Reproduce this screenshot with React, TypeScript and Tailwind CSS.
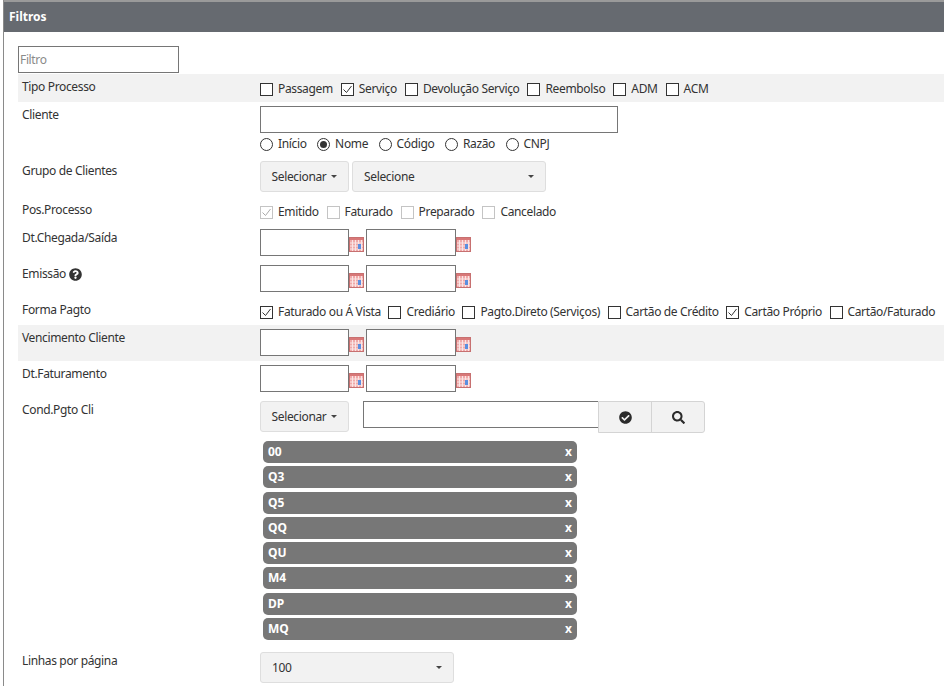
import type { ReactNode } from 'react'
import { FaCheckCircle, FaQuestionCircle, FaSearch } from 'react-icons/fa'

const font = "font-['Noto_Sans',sans-serif]"

function Caret() {
  return <span className="inline-block border-x-[3px] border-t-[3px] border-x-transparent border-t-[#444]" />
}

function CalendarIcon() {
  return (
    <svg width="15" height="15" viewBox="0 0 15 15" className="shrink-0">
      <rect x="0.5" y="0.5" width="14" height="14" fill="#f0a9a9" stroke="#c77070" />
      <rect x="1" y="1" width="13" height="2" fill="#d87878" />
      <path d="M3.5 3v11M6.5 3v11M9.5 3v11M12.5 3v11M1 6h13M1 9h13M1 12h13" stroke="#fff" strokeWidth="1" opacity="0.7" />
      <rect x="9" y="7" width="3" height="5" fill="#5b8fe0" />
    </svg>
  )
}

function Check({ label, checked, muted }: { label: string; checked?: boolean; muted?: boolean }) {
  return (
    <span className="flex items-center gap-[5px]">
      <span className={`flex h-[13px] w-[13px] items-center justify-center border bg-white ${muted ? 'border-[#c4c4c4]' : 'border-[#333]'}`}>
        {checked && (
          <svg width="11" height="11" viewBox="0 0 11 11">
            <path d="M1.5 5.5l3 3 5-6.5" fill="none" stroke={muted ? '#aaa' : '#333'} strokeWidth="1" />
          </svg>
        )}
      </span>
      <span>{label}</span>
    </span>
  )
}

function Radio({ label, checked }: { label: string; checked?: boolean }) {
  return (
    <span className="flex items-center gap-[5px]">
      <span className="flex h-[13px] w-[13px] items-center justify-center rounded-full border border-[#333] bg-white">
        {checked && <span className="h-[7px] w-[7px] rounded-full bg-[#333]" />}
      </span>
      <span>{label}</span>
    </span>
  )
}

function Row({ label, shaded, className = '', children }: { label: ReactNode; shaded?: boolean; className?: string; children: ReactNode }) {
  return (
    <div className={`flex ${shaded ? 'bg-[#f2f2f2]' : ''} ${className}`}>
      <div className="h-[26px] w-[242px] shrink-0 pl-1 pt-1 leading-[18px]">{label}</div>
      <div className="min-w-0 flex-1">{children}</div>
    </div>
  )
}

function DateInput({ className = '' }: { className?: string }) {
  return <input className={`h-[27px] border border-[#767676] bg-white ${className}`} />
}

function DateRange() {
  return (
    <div className="flex items-center pt-1">
      <DateInput className="w-[89px]" />
      <span className="mt-[3px] w-[17px]"><CalendarIcon /></span>
      <DateInput className="w-[90px]" />
      <span className="mt-[3px]"><CalendarIcon /></span>
    </div>
  )
}

function GrayButton({ className = '', children }: { className?: string; children: ReactNode }) {
  return (
    <div className={`flex h-[31px] items-center rounded-[3px] border border-[#dedede] bg-[#f2f2f2] text-[#333] ${className}`}>
      {children}
    </div>
  )
}

const tags = ['00', 'Q3', 'Q5', 'QQ', 'QU', 'M4', 'DP', 'MQ']

export default function App() {
  return (
    <div className={`${font} h-[686px] overflow-hidden bg-white text-[12px] tracking-[-0.35px] text-[#333]`}>
      <div className="ml-[3px] h-full border-l border-[#8a8a8a]">
        <div className="flex h-8 items-center border-t-2 border-[#9a9a9a] bg-[#666a70] pl-[5px] text-[12px] font-bold tracking-normal text-white">
          Filtros
        </div>
        <div className="pl-[14px] pt-[14px]">
          <input
            placeholder="Filtro"
            className="mb-px block h-[27px] w-[161px] border border-[#767676] pl-[1px] placeholder:text-[#8a8a8a]"
          />
          <Row label="Tipo Processo" shaded className="h-[28px]">
            <div className="flex gap-[8px] pt-[6px] leading-[18px]">
              <Check label="Passagem" />
              <Check label="Serviço" checked />
              <Check label="Devolução Serviço" />
              <Check label="Reembolso" />
              <Check label="ADM" />
              <Check label="ACM" />
            </div>
          </Row>
          <Row label="Cliente" className="h-[56px]">
            <div className="pt-1">
              <input className="block h-[27px] w-[358px] border border-[#767676]" />
              <div className="flex gap-[10.5px] pt-[2px] leading-[18px]">
                <Radio label="Início" />
                <Radio label="Nome" checked />
                <Radio label="Código" />
                <Radio label="Razão" />
                <Radio label="CNPJ" />
              </div>
            </div>
          </Row>
          <Row label="Grupo de Clientes" className="h-[39px]">
            <div className="flex gap-[3px] pt-[3px]">
              <GrayButton className="w-[89px] justify-center gap-[5px]">Selecionar <Caret /></GrayButton>
              <GrayButton className="w-[194px] justify-between pl-[11px] pr-[11px]">Selecione <Caret /></GrayButton>
            </div>
          </Row>
          <Row label="Pos.Processo" className="h-[28px]">
            <div className="flex gap-[8px] pt-[6px] leading-[18px]">
              <Check label="Emitido" checked muted />
              <Check label="Faturado" muted />
              <Check label="Preparado" muted />
              <Check label="Cancelado" muted />
            </div>
          </Row>
          <Row label="Dt.Chegada/Saída" className="h-[36px]"><DateRange /></Row>
          <Row
            label={<span className="flex items-center gap-[3px]">Emissão <FaQuestionCircle className="text-[13px] text-[#333]" /></span>}
            className="h-[36px]"
          >
            <DateRange />
          </Row>
          <Row label="Forma Pagto" className="h-[28px]">
            <div className="flex gap-[7.5px] pt-[6px] leading-[18px] whitespace-nowrap">
              <Check label="Faturado ou Á Vista" checked />
              <Check label="Crediário" />
              <Check label="Pagto.Direto (Serviços)" />
              <Check label="Cartão de Crédito" />
              <Check label="Cartão Próprio" checked />
              <Check label="Cartão/Faturado" />
            </div>
          </Row>
          <Row label="Vencimento Cliente" shaded className="h-[36px]"><DateRange /></Row>
          <Row label="Dt.Faturamento" className="h-[36px]"><DateRange /></Row>
          <Row label="Cond.Pgto Cli" className="h-[251px]">
            <div className="flex pt-1">
              <GrayButton className="w-[89px] justify-center gap-[5px]">Selecionar <Caret /></GrayButton>
              <input className="ml-[14px] h-[27px] w-[235px] border border-r-0 border-[#767676]" />
              <div className="flex h-[32px] w-[107px] rounded-r-[3px] border border-[#d4d4d4] bg-[#f2f2f2] text-[13px] text-[#2b2b2b]">
                <span className="flex flex-1 items-center justify-center border-r border-[#d4d4d4]"><FaCheckCircle /></span>
                <span className="flex flex-1 items-center justify-center"><FaSearch /></span>
              </div>
            </div>
            <div className="ml-[3px] mt-2 flex w-[314px] flex-col gap-[3.3px]">
              {tags.map(tag => (
                <div key={tag} className="flex h-[22px] items-center justify-between rounded-[5px] bg-[#777] px-[5px] text-[12px] font-bold tracking-normal text-white">
                  <span>{tag}</span>
                  <span>x</span>
                </div>
              ))}
            </div>
          </Row>
          <Row label="Linhas por página">
            <div className="pt-1">
              <GrayButton className="w-[194px] justify-between pl-[11px] pr-[11px]">100 <Caret /></GrayButton>
            </div>
          </Row>
        </div>
      </div>
    </div>
  )
}
